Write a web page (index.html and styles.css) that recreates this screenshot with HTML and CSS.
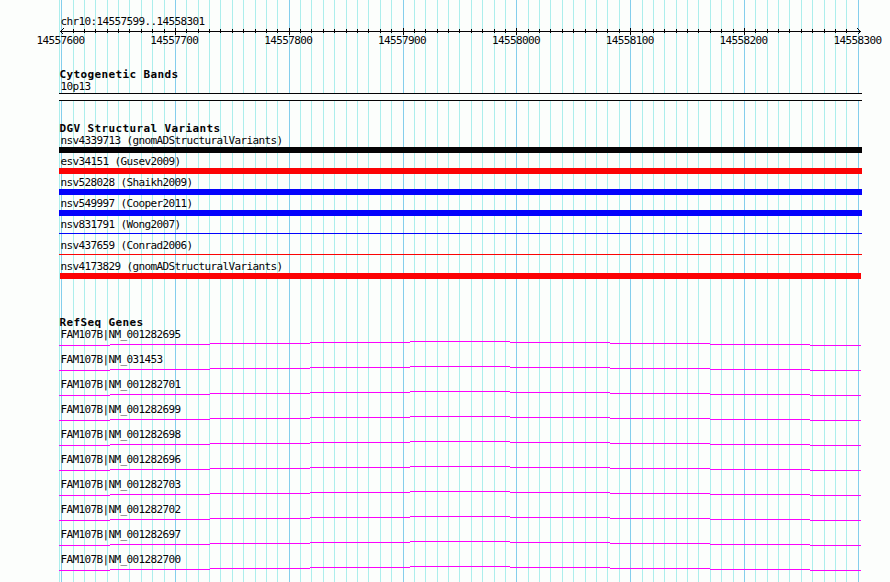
FILE: index.html
```
<!DOCTYPE html>
<html lang="en">
<head>
    <meta charset="UTF-8">
    <title>chr10:14557599..14558301</title>
    <link rel="stylesheet" href="styles.css">
</head>
<body>
    <div class="browser">
        <svg class="grid" id="grid" width="890" height="582" shape-rendering="crispEdges"></svg>

        <div class="tracks">
            <div class="ruler">
                <div class="label">chr10:14557599..14558301</div>
                <svg class="scale" id="scale" width="802" height="8" shape-rendering="crispEdges"></svg>
                <div class="numbers">
                    <span>14557600</span><span>14557700</span><span>14557800</span><span>14557900</span><span>14558000</span><span>14558100</span><span>14558200</span><span>14558300</span>
                </div>
            </div>

            <div class="track cyto">
                <h2>Cytogenetic Bands</h2>
                <div class="label">10p13</div>
                <div class="band"></div>
            </div>

            <div class="track dgv">
                <h2>DGV Structural Variants</h2>
                <div class="variant"><div class="label">nsv4339713 (gnomADStructuralVariants)</div><div class="bar black"></div></div>
                <div class="variant"><div class="label">esv34151 (Gusev2009)</div><div class="bar red"></div></div>
                <div class="variant"><div class="label">nsv528028 (Shaikh2009)</div><div class="bar blue"></div></div>
                <div class="variant"><div class="label">nsv549997 (Cooper2011)</div><div class="bar blue"></div></div>
                <div class="variant"><div class="label">nsv831791 (Wong2007)</div><div class="bar thin blue"></div></div>
                <div class="variant"><div class="label">nsv437659 (Conrad2006)</div><div class="bar thin red"></div></div>
                <div class="variant"><div class="label">nsv4173829 (gnomADStructuralVariants)</div><div class="bar red short"></div></div>
            </div>

            <div class="track genes" id="genes">
                <h2>RefSeq Genes</h2>
            </div>
        </div>
    </div>

    <script src="script.js"></script>
</body>
</html>
```
FILE: styles.css
```
body {
    margin: 0;
    background-color: #fcfefc;
    color: #040204;
    font-family: "DejaVu Sans Mono", monospace;
    overflow: hidden;
}

.browser {
    position: relative;
    width: 890px;
    height: 582px;
    overflow: hidden;
}

.grid {
    position: absolute;
    top: 0;
    left: 0;
}

.tracks {
    position: relative;
    margin-left: 59px;
    width: 803px;
    padding-top: 15px;
}

.label {
    height: 13px;
    padding-left: 1.4px;
    font-size: 11px;
    line-height: 13px;
    letter-spacing: -0.622px;
    white-space: nowrap;
}

h2 {
    margin: 0;
    height: 12px;
    padding-left: 0.4px;
    font-size: 11px;
    line-height: 14px;
    font-weight: bold;
    letter-spacing: 0.378px;
    white-space: nowrap;
}

.ruler {
    height: 53px;
}

.scale {
    display: block;
}

.numbers {
    display: flex;
    gap: 65.85px;
    margin-left: -22.5px;
    margin-top: -2px;
}

.numbers span {
    flex: none;
    width: 48px;
    font-size: 11px;
    line-height: 13px;
    letter-spacing: -0.622px;
}

.cyto {
    height: 54px;
}

.band {
    height: 6px;
    border-top: 1px solid #040204;
    border-bottom: 1px solid #040204;
    background-color: #fcfefc;
}

.dgv {
    height: 194px;
}

.variant {
    height: 21px;
}

.bar {
    height: 6px;
}

.thin {
    height: 1px;
    margin-top: 2px;
}

.short {
    margin-left: 1px;
    margin-right: 1px;
}

.black {
    background-color: #040204;
}

.red {
    background-color: #fc0204;
}

.blue {
    background-color: #0402fc;
}

.gene {
    height: 25px;
}

.gene svg {
    display: block;
}
```
FILE: script.js
```
const NS = 'http://www.w3.org/2000/svg';
const SCALE = 800 / 703;

function addPath(svg, d, color) {
    const path = document.createElementNS(NS, 'path');
    path.setAttribute('d', d);
    path.setAttribute('stroke', color);
    path.setAttribute('fill', 'none');
    svg.appendChild(path);
}

// x of every 10th base, starting at 14557600
const marks = [];
for (let i = 0; i <= 70; i++) {
    marks.push(Math.round(60 + SCALE * (1 + i * 10)));
}

// vertical grid
let minor = 'M59.5 0V582';
let major = '';
marks.forEach((x, i) => {
    const line = `M${x + 0.5} 0V582`;
    if (i % 10 === 0) major += line;
    else minor += line;
});
const grid = document.getElementById('grid');
addPath(grid, minor, '#aceeec');
addPath(grid, major, '#84ceec');

// ruler with ticks and arrow heads
let ruler = 'M1 3.5H802';
marks.forEach((x, i) => {
    if (i === 0 || i === 70) return;
    ruler += i % 10 === 0 ? `M${x - 58.5} 0V7` : `M${x - 58.5} 1V5`;
});
const scale = document.getElementById('scale');
addPath(scale, ruler, '#040204');
addPath(scale, 'M4.5 0.5L1.5 3.5L4.5 6.5M798.5 0.5L801.5 3.5L798.5 6.5', '#040204');

// gene rows
const genes = ['001282695', '031453', '001282701', '001282699', '001282698',
    '001282696', '001282703', '001282702', '001282697', '001282700'];
const intron = 'M0 4.5H51M51 3.5H151M151 2.5H251M251 1.5H351M351 0.5H451' +
    'M451 1.5H551M551 2.5H651M651 3.5H751M751 4.5H802';
const track = document.getElementById('genes');
genes.forEach(id => {
    const row = document.createElement('div');
    row.className = 'gene';
    row.innerHTML = `<div class="label">FAM107B|NM_${id}</div>` +
        '<svg width="802" height="8" shape-rendering="crispEdges"></svg>';
    addPath(row.querySelector('svg'), intron, '#fc02fc');
    track.appendChild(row);
});
```
